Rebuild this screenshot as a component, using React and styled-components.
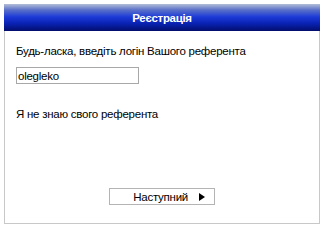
import React, { useState } from 'react';
import styled, { createGlobalStyle } from 'styled-components';

const GlobalStyle = createGlobalStyle`
  html, body {
    margin: 0;
    padding: 0;
    background: #ffffff;
  }
  body {
    font-family: "Liberation Sans", Arial, sans-serif;
    font-size: 12px;
    color: #000;
  }
`;

const Page = styled.div`
  padding: 4px 4px 0 4px;
`;

const Panel = styled.div`
  width: 316px;
  height: 220px;
  box-sizing: border-box;
  border: 1px solid #c8c8c8;
  border-top: none;
  display: flex;
  flex-direction: column;
  background: #fff;
`;

const Header = styled.div`
  height: 27px;
  margin: 0 -1px;
  background: linear-gradient(to bottom, #b4bed8 0%, #5a70c8 22%, #1c3ad8 48%, #0a22b4 72%, #020e6c 100%);
  color: #fff;
  font-weight: bold;
  font-size: 11.5px;
  letter-spacing: -0.3px;
  display: flex;
  align-items: center;
  justify-content: center;
`;

const Body = styled.div`
  flex: 1;
  padding: 13px 11px 0 11px;
  display: flex;
  flex-direction: column;
`;

const Label = styled.div`
  font-size: 11.5px;
  line-height: 14px;
  letter-spacing: -0.25px;
`;

const Input = styled.input`
  margin-top: 9px;
  width: 123px;
  height: 17px;
  box-sizing: border-box;
  border: 1px solid #a8a8a8;
  padding: 0 1px;
  font-family: "Liberation Sans", Arial, sans-serif;
  font-size: 11.5px;
  letter-spacing: -0.25px;
  color: #000;
  outline: none;
`;

const LinkText = styled.div`
  margin-top: 23px;
  font-size: 11.5px;
  line-height: 14px;
  letter-spacing: -0.25px;
  cursor: pointer;
`;

const Footer = styled.div`
  margin-top: auto;
  margin-bottom: 18px;
  display: flex;
  justify-content: center;
`;

const Button = styled.button`
  width: 106px;
  height: 17px;
  box-sizing: border-box;
  border: 1px solid #b4b4b4;
  background: #fff;
  font-family: "Liberation Sans", Arial, sans-serif;
  font-size: 11.5px;
  letter-spacing: -0.25px;
  color: #000;
  display: flex;
  align-items: center;
  justify-content: flex-end;
  gap: 11px;
  padding: 0 9px 0 0;
  cursor: pointer;
`;

const Arrow = styled.span`
  width: 0;
  height: 0;
  border-top: 4px solid transparent;
  border-bottom: 4px solid transparent;
  border-left: 6px solid #000;
`;

export default function App() {
  const [login, setLogin] = useState('olegleko');
  return (
    <>
      <GlobalStyle />
      <Page>
        <Panel>
          <Header>Реєстрація</Header>
          <Body>
            <Label>Будь-ласка, введіть логін Вашого референта</Label>
            <Input value={login} onChange={(e) => setLogin(e.target.value)} />
            <LinkText>Я не знаю свого референта</LinkText>
            <Footer>
              <Button>
                Наступний
                <Arrow />
              </Button>
            </Footer>
          </Body>
        </Panel>
      </Page>
    </>
  );
}
